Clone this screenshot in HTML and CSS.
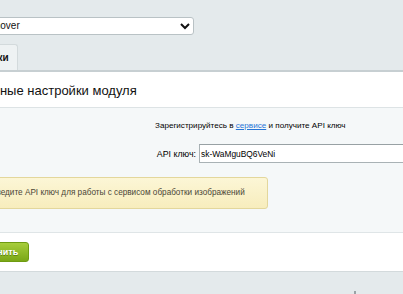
FILE: index.html
```html
<!DOCTYPE html>
<html>
<head>
    <title>Настройки модуля</title>
    <link rel="stylesheet" href="styles.css">
</head>
<body>
    <div class="page">
        <div class="site-row">
            <select class="site-select">
                <option>Background Remover</option>
            </select>
        </div>

        <div class="tabs">
            <span class="tab active">Настройки</span>
        </div>

        <div class="panel">
            <div class="panel-title">Основные настройки модуля</div>

            <div class="panel-body">
                <div class="hint">Зарегистрируйтесь в <a href="#">сервисе</a> и получите API ключ</div>
                <div class="row">
                    <label class="cell-label" for="apiKey">API ключ:</label>
                    <div class="cell-field"><input id="apiKey" type="text" value="sk-WaMguBQ6VeNi"></div>
                </div>
                <div class="notice">Введите API ключ для работы с сервисом обработки изображений</div>
            </div>

            <div class="panel-footer">
                <button class="save">Сохранить</button>
            </div>
        </div>
        <div class="bottom"><span class="grip"></span></div>
    </div>
</body>
</html>
```

FILE: styles.css
```css
body { margin: 0; background: #e4eaec; font-family: "Liberation Sans", Arial, sans-serif; overflow: hidden; }
.page { margin-left: -60px; width: 520px; }
.site-row { padding-top: 15px; height: 29px; }
.site-select { margin-left: -26px; width: 280px; height: 18px; font-family: "Liberation Sans", Arial, sans-serif; font-size: 10px; color: #111; border: 1px solid #b9c2c5; border-radius: 3px; background: #fff; padding: 0 4px; }
.tabs { display: flex; height: 26px; }
.tab { display: flex; align-items: center; padding: 0 8px 0 15px; background: #eef2f3; border: 1px solid #d3dadc; border-bottom: none; border-radius: 3px 3px 0 0; font-size: 10px; font-weight: bold; color: #111; }
.panel { border-top: 2px solid #c7cfd2; background: #fff; border-bottom: 1px solid #d3dadc; }
.panel-title { padding: 0 0 0 22px; height: 35px; line-height: 37px; font-size: 13px; color: #111; border-bottom: 1px solid #dde3e5; }
.panel-body { background: #f5f8f9; padding: 9px 0 23px; border-bottom: 1px solid #dfe5e7; }
.hint { height: 18px; line-height: 18px; padding-left: 215px; font-size: 8.1px; color: #000; }
.hint a { color: #2675d7; }
.row { display: flex; align-items: center; margin-top: 9px; font-size: 8.8px; color: #000; }
.cell-label { width: 259px; text-align: right; padding-right: 3px; box-sizing: border-box; }
.cell-field { flex: 1; }
.row input { width: 240px; height: 19px; box-sizing: border-box; border: 1px solid #a9b2b5; border-top-color: #98a1a4; padding: 0 1px; font-family: "Liberation Sans", Arial, sans-serif; font-size: 8.4px; color: #000; }
.notice { margin: 14px 0 0 40px; width: 288px; height: 32px; box-sizing: border-box; line-height: 30px; padding-left: 10px; font-size: 8.2px; color: #4a4636; white-space: nowrap; background: linear-gradient(#fcf6d6, #f7edbd); border: 1px solid #e3d79c; border-radius: 3px; }
.panel-footer { height: 38px; display: flex; align-items: center; padding-left: 40px; }
.save { height: 20px; padding: 0 10px 0 12px; margin-left: -23px; border: 1px solid #6e9b11; border-radius: 3px; background: linear-gradient(#a7cd3b, #7aa716); color: #fff; font-family: "Liberation Sans", Arial, sans-serif; font-size: 9px; font-weight: bold; text-shadow: 0 1px 0 #5e8510; }
.bottom { height: 30px; position: relative; }
.grip { position: absolute; left: 414px; top: 19px; width: 2px; height: 3px; background: #9aa3a6; }
```
